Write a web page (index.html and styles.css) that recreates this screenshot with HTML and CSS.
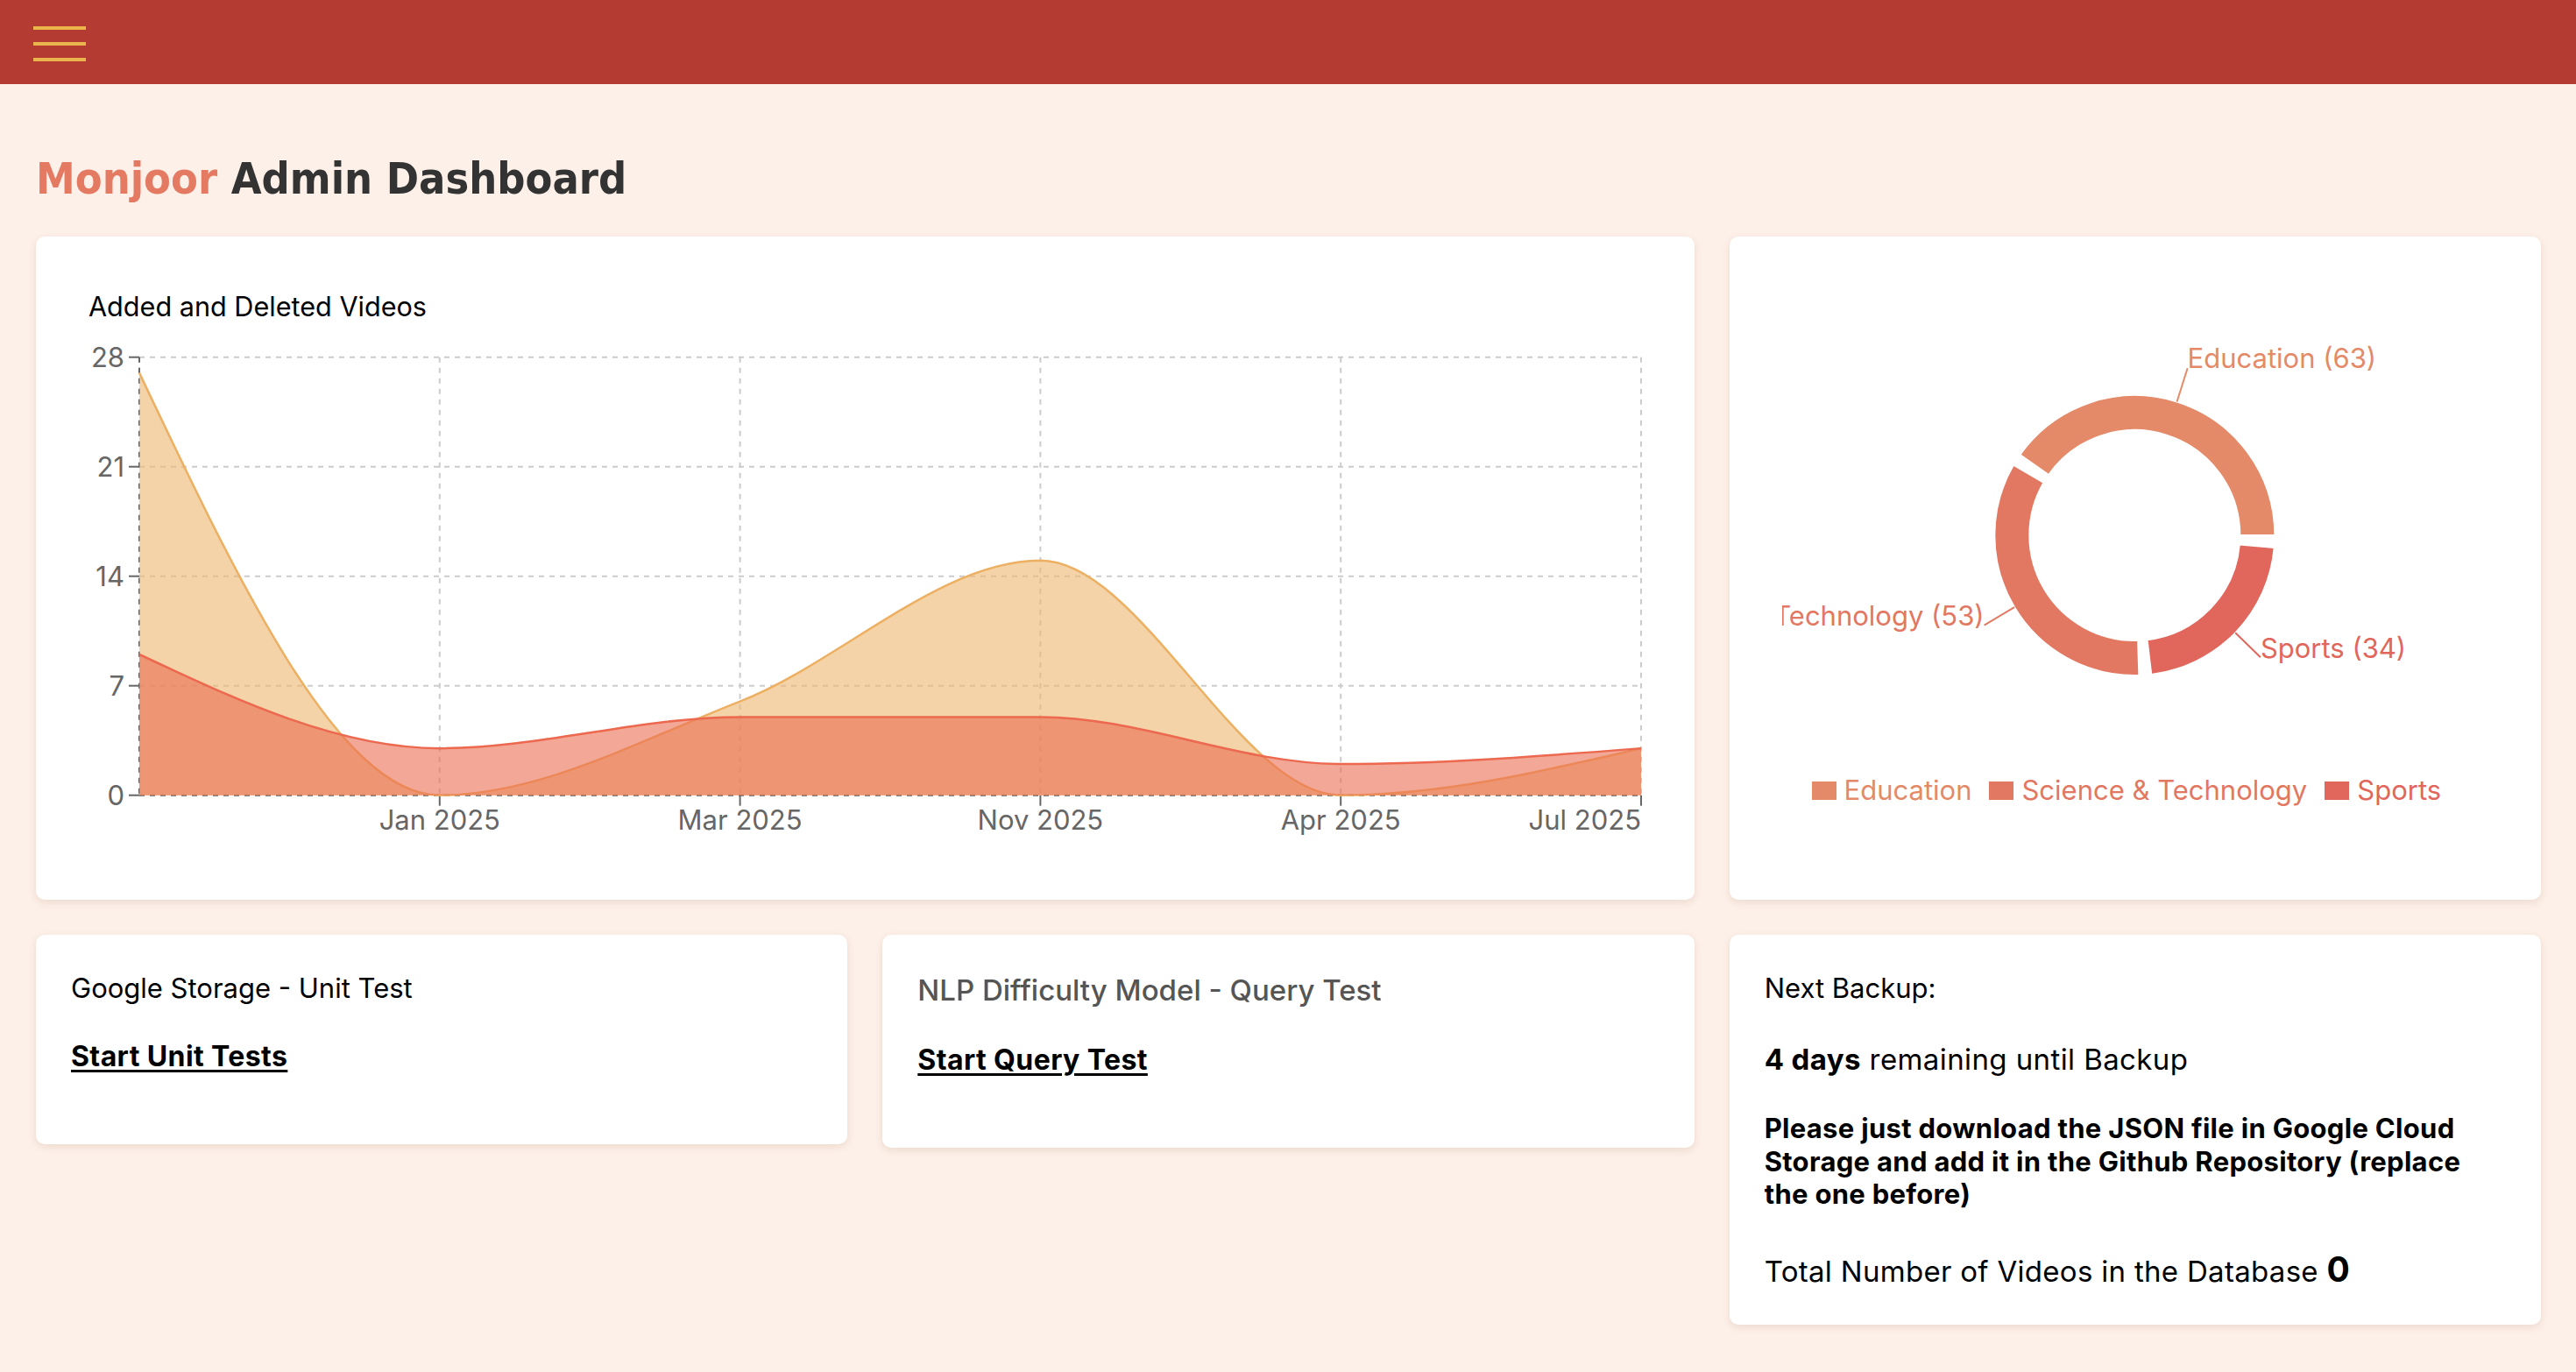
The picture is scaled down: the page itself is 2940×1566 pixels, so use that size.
FILE: index.html
```html
<!DOCTYPE html>
<html lang="en">
<head>
<meta charset="utf-8">
<title>Monjoor Admin Dashboard</title>
<link rel="stylesheet" href="styles.css">
</head>
<body>
<header class="topbar">
  <button class="menu-btn" type="button" aria-label="Open menu"><span></span><span></span><span></span></button>
</header>
<main class="page">
  <h1 class="page-title"><span class="brand">Monjoor</span> Admin Dashboard</h1>
  <div class="grid">
    <section class="card chart-card">
      <h2 class="chart-title">Added and Deleted Videos</h2>
      <svg class="area-chart" viewBox="101 369 1772.67 598" preserveAspectRatio="xMinYMin meet" role="img" aria-label="Added and deleted videos chart">
        <g class="grid-lines">
          <line x1="159" y1="407.7" x2="1873" y2="407.7"/>
          <line x1="159" y1="532.7" x2="1873" y2="532.7"/>
          <line x1="159" y1="657.7" x2="1873" y2="657.7"/>
          <line x1="159" y1="782.7" x2="1873" y2="782.7"/>
          <line x1="159" y1="907.7" x2="1873" y2="907.7"/>
          <line x1="159" y1="407.7" x2="159" y2="907.7"/>
          <line x1="501.8" y1="407.7" x2="501.8" y2="907.7"/>
          <line x1="844.6" y1="407.7" x2="844.6" y2="907.7"/>
          <line x1="1187.4" y1="407.7" x2="1187.4" y2="907.7"/>
          <line x1="1530.2" y1="407.7" x2="1530.2" y2="907.7"/>
          <line x1="1873" y1="407.7" x2="1873" y2="907.7"/>
        </g>
        <g class="axis">
          <line class="axis-line" x1="159" y1="907.7" x2="1873" y2="907.7"/>
          <line class="axis-line" x1="159" y1="407.7" x2="159" y2="907.7"/>
          <line x1="147" y1="407.7" x2="159" y2="407.7"/>
          <line x1="147" y1="532.7" x2="159" y2="532.7"/>
          <line x1="147" y1="657.7" x2="159" y2="657.7"/>
          <line x1="147" y1="782.7" x2="159" y2="782.7"/>
          <line x1="147" y1="907.7" x2="159" y2="907.7"/>
          <line x1="501.8" y1="907.7" x2="501.8" y2="919.7"/>
          <line x1="844.6" y1="907.7" x2="844.6" y2="919.7"/>
          <line x1="1187.4" y1="907.7" x2="1187.4" y2="919.7"/>
          <line x1="1530.2" y1="907.7" x2="1530.2" y2="919.7"/>
          <line x1="1873" y1="907.7" x2="1873" y2="919.7"/>
          <text class="tick y-tick" x="142" y="419">28</text>
          <text class="tick y-tick" x="142" y="544">21</text>
          <text class="tick y-tick" x="142" y="669">14</text>
          <text class="tick y-tick" x="142" y="794">7</text>
          <text class="tick y-tick" x="142" y="919">0</text>
          <text class="tick x-tick" x="501.8" y="946.7">Jan 2025</text>
          <text class="tick x-tick" x="844.6" y="946.7">Mar 2025</text>
          <text class="tick x-tick" x="1187.4" y="946.7">Nov 2025</text>
          <text class="tick x-tick" x="1530.2" y="946.7">Apr 2025</text>
          <text class="tick x-tick-end" x="1873" y="946.7">Jul 2025</text>
        </g>
        <g class="series-added">
          <path class="area-fill" d="M159,425.56 C273.27,666.63 387.53,907.7 501.8,907.7 C616.07,907.7 730.33,845.2 844.6,800.56 C958.87,755.91 1073.13,639.84 1187.4,639.84 C1301.67,639.84 1415.93,907.7 1530.2,907.7 C1644.47,907.7 1758.73,880.91 1873,854.13 L1873,907.7 L159,907.7 Z"/>
          <path class="area-stroke" d="M159,425.56 C273.27,666.63 387.53,907.7 501.8,907.7 C616.07,907.7 730.33,845.2 844.6,800.56 C958.87,755.91 1073.13,639.84 1187.4,639.84 C1301.67,639.84 1415.93,907.7 1530.2,907.7 C1644.47,907.7 1758.73,880.91 1873,854.13"/>
        </g>
        <g class="series-deleted">
          <path class="area-fill" d="M159,746.99 C273.27,800.56 387.53,854.13 501.8,854.13 C616.07,854.13 730.33,818.41 844.6,818.41 C958.87,818.41 1073.13,818.41 1187.4,818.41 C1301.67,818.41 1415.93,871.99 1530.2,871.99 C1644.47,871.99 1758.73,863.06 1873,854.13 L1873,907.7 L159,907.7 Z"/>
          <path class="area-stroke" d="M159,746.99 C273.27,800.56 387.53,854.13 501.8,854.13 C616.07,854.13 730.33,818.41 844.6,818.41 C958.87,818.41 1073.13,818.41 1187.4,818.41 C1301.67,818.41 1415.93,871.99 1530.2,871.99 C1644.47,871.99 1758.73,863.06 1873,854.13"/>
        </g>
      </svg>
    </section>

    <section class="card pie-card">
      <svg class="pie-chart" viewBox="2033.67 330 806.33 553" preserveAspectRatio="xMinYMin meet" role="img" aria-label="Videos per category">
        <path class="sector edu" d="M2596,611 A160,160 0 0 0 2305.1,519 L2337.83,542 A120,120 0 0 1 2556,611 Z"/>
        <path class="sector tech" d="M2297.57,530.76 A160,160 0 0 0 2441.03,770.92 L2439.77,730.94 A120,120 0 0 1 2332.18,550.82 Z"/>
        <path class="sector sports" d="M2454.95,769.88 A160,160 0 0 0 2595.39,624.95 L2555.54,621.46 A120,120 0 0 1 2450.21,730.16 Z"/>
        <path class="label-line edu-line" d="M2484.24,458.44 L2496.3,420.3"/>
        <path class="label-line tech-line" d="M2298.64,693.05 L2264.3,713.56"/>
        <path class="label-line sports-line" d="M2550.9,722.34 L2579.62,750.18"/>
        <text class="pie-label edu-text" x="2496.3" y="420">Education (63)</text>
        <text class="pie-label tech-text end" x="2264.3" y="714">Science &amp; Technology (53)</text>
        <text class="pie-label sports-text" x="2579.6" y="751">Sports (34)</text>
      </svg>
      <ul class="legend">
        <li class="legend-item edu-c"><span class="legend-swatch"></span>Education</li>
        <li class="legend-item tech-c"><span class="legend-swatch"></span>Science &amp; Technology</li>
        <li class="legend-item sports-c"><span class="legend-swatch"></span>Sports</li>
      </ul>
    </section>

    <section class="card test-card">
      <p class="card-label">Google Storage - Unit Test</p>
      <p class="card-action"><a class="card-link" href="#">Start Unit Tests</a></p>
    </section>

    <section class="card test-card">
      <p class="card-label muted">NLP Difficulty Model - Query Test</p>
      <p class="card-action"><a class="card-link" href="#">Start Query Test</a></p>
    </section>

    <section class="card backup-card">
      <p class="backup-label">Next Backup:</p>
      <p class="backup-days"><strong>4 days</strong> remaining until Backup</p>
      <p class="backup-note">Please just download the JSON file in Google Cloud Storage and add it in the Github Repository (replace the one before)</p>
      <p class="backup-total">Total Number of Videos in the Database <strong>0</strong></p>
    </section>
  </div>
</main>
</body>
</html>
```

FILE: styles.css
```css
* { box-sizing: border-box; }

html, body { margin: 0; }

body {
  background: #FDF0E8;
  font-family: Inter, "Noto Sans", "Liberation Sans", sans-serif;
  color: #000;
  min-height: 1566px;
}

.topbar {
  height: 96px;
  background: #B33B31;
  padding: 30px 0 0 38px;
}

.menu-btn {
  display: flex;
  flex-direction: column;
  gap: 14px;
  width: 60px;
  padding: 0;
  border: 0;
  background: none;
  cursor: pointer;
}

.menu-btn span {
  display: block;
  height: 4px;
  background: #EBB54D;
}

.page {
  padding: 0 40px 40px 41px;
}

.page-title {
  margin: 78px 0 36px 0;
  font-family: "DejaVu Sans Condensed", "DejaVu Sans", sans-serif;
  font-stretch: condensed;
  font-weight: 700;
  font-size: 50px;
  line-height: 60px;
  color: #333333;
}

.brand { color: #E47A62; }

.grid {
  display: grid;
  grid-template-columns: repeat(3, 1fr);
  gap: 40px;
  align-items: start;
}

.card {
  background: #fff;
  border-radius: 10px;
  box-shadow: 0 3px 9px rgba(120, 70, 40, 0.13);
}

/* Area chart card */
.chart-card {
  grid-column: span 2;
  padding: 61px 60px 60px;
}

.chart-title {
  margin: 0;
  font-size: 30.6px;
  line-height: 38px;
  font-weight: 400;
}

.area-chart {
  display: block;
  width: 100%;
  height: 598px;
}

.grid-lines line {
  stroke: #cccccc;
  stroke-width: 2;
  stroke-dasharray: 6 6;
}

.axis line {
  stroke: #666666;
  stroke-width: 2;
}

.axis .axis-line { stroke-dasharray: 6 6; }

.tick {
  font-family: Inter, "Noto Sans", sans-serif;
  font-size: 31px;
  fill: #666666;
}

.y-tick { text-anchor: end; }
.x-tick { text-anchor: middle; }
.x-tick-end { text-anchor: end; }

.area-fill { fill-opacity: 0.6; stroke: none; }
.area-stroke { fill: none; stroke-width: 2.5; }

.series-added .area-fill { fill: #EBB56D; }
.series-added .area-stroke { stroke: #EDB062; }
.series-deleted .area-fill { fill: #EB6C52; }
.series-deleted .area-stroke { stroke: #EC684E; }

/* Pie card */
.pie-card {
  align-self: stretch;
  padding: 60px;
}

.pie-chart {
  display: block;
  width: 100%;
  height: 553px;
}

.sector { stroke: #fff; stroke-width: 2; }
.edu { fill: #E48A68; }
.tech { fill: #E27862; }
.sports { fill: #E1665C; }

.label-line { fill: none; stroke-width: 2; }
.edu-line { stroke: #E48A68; }
.tech-line { stroke: #E27862; }
.sports-line { stroke: #E1665C; }

.pie-label {
  font-family: Inter, "Noto Sans", sans-serif;
  font-size: 31px;
}
.pie-label.end { text-anchor: end; }
.edu-text { fill: #E48A68; }
.tech-text { fill: #E27862; }
.sports-text { fill: #E1665C; }

.legend {
  display: flex;
  justify-content: center;
  list-style: none;
  margin: 0;
  padding: 0;
  font-size: 31px;
  line-height: 38px;
}

.legend-item {
  display: flex;
  align-items: center;
  margin-right: 20px;
}

.legend-swatch {
  width: 28px;
  height: 21px;
  margin-right: 9px;
  background: currentColor;
}

.edu-c { color: #E48A68; }
.tech-c { color: #E27862; }
.sports-c { color: #E1665C; }

/* Test cards */
.test-card {
  display: flex;
  flex-direction: column;
  gap: 40px;
  padding: 42px 40px 81px;
}

.card-label {
  margin: 0;
  font-size: 31px;
  line-height: 38px;
}

.card-label.muted {
  color: #555555;
  font-size: 33px;
  line-height: 42px;
  font-weight: 500;
}

.card-action {
  margin: 0;
  font-size: 32px;
  line-height: 38px;
}

.card-link {
  color: #000;
  font-weight: 700;
  letter-spacing: 0.4px;
  text-decoration: underline;
  text-decoration-thickness: 3px;
  text-underline-offset: 4px;
}

/* Backup card */
.backup-card {
  padding: 42px 40px 42px;
}

.backup-label {
  margin: 0 0 42px;
  font-size: 31px;
  line-height: 38px;
}

.backup-days {
  margin: 0 0 40px;
  font-size: 33px;
  line-height: 40px;
  letter-spacing: 0.4px;
}

.backup-note {
  max-width: 825px;
  margin: 0 0 47px;
  font-size: 31px;
  line-height: 37.5px;
  font-weight: 700;
  letter-spacing: 0.3px;
}

.backup-total {
  margin: 0;
  font-size: 33px;
  line-height: 38px;
  letter-spacing: 0.3px;
}

.backup-total strong {
  font-size: 39px;
  line-height: 1;
}
```
